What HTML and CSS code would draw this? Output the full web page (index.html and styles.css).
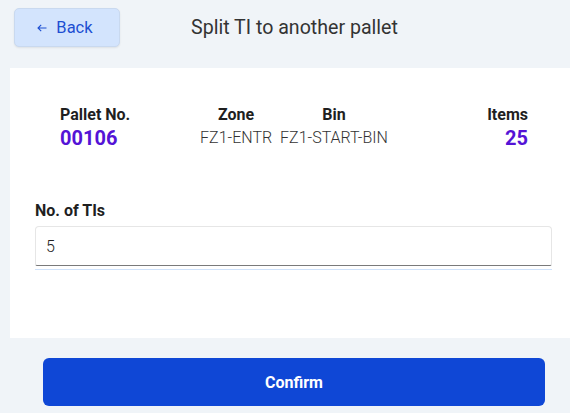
FILE: index.html
```html
<!DOCTYPE html>
<html>
<head>
<meta charset="utf-8">
<link rel="stylesheet" href="styles.css">
</head>
<body>
<div class="page">
  <header class="topbar">
    <button class="back-btn"><svg class="arrow" width="10" height="8" viewBox="0 0 10 8"><path d="M9.5 4H1M4.2 0.8L1 4l3.2 3.2" fill="none" stroke="currentColor" stroke-width="1.1"/></svg><span>Back</span></button>
    <h1 class="title">Split TI to another pallet</h1>
  </header>
  <section class="card">
    <div class="info">
      <div class="col col-left">
        <div class="label">Pallet No.</div>
        <div class="value-strong">00106</div>
      </div>
      <div class="mid">
        <div class="col col-center">
          <div class="label">Zone</div>
          <div class="value">FZ1-ENTR</div>
        </div>
        <div class="col col-center">
          <div class="label">Bin</div>
          <div class="value">FZ1-START-BIN</div>
        </div>
      </div>
      <div class="col col-right">
        <div class="label">Items</div>
        <div class="value-strong">25</div>
      </div>
    </div>
    <div class="field">
      <div class="field-label">No. of TIs</div>
      <div class="input">5</div>
      <div class="focus-line"></div>
    </div>
  </section>
  <div class="actions">
    <button class="confirm">Confirm</button>
  </div>
</div>
</body>
</html>
```
FILE: styles.css
```css
* { box-sizing: border-box; }
html, body {
  margin: 0;
  padding: 0;
  background: #f0f4f8;
  font-family: Roboto, "Liberation Sans", sans-serif;
  color: #222;
}
.page {
  width: 570px;
  height: 413px;
  overflow: hidden;
}
.topbar {
  display: flex;
  align-items: flex-start;
  height: 68px;
  padding: 8px 0 0 14px;
}
.back-btn {
  width: 106px;
  height: 39px;
  background: #d3e4fd;
  border: 1px solid #c9d9ef;
  border-radius: 5px;
  box-shadow: 0 1px 2px rgba(0,0,0,0.08);
  color: #1d4fd2;
  font-family: Roboto, "Liberation Sans", sans-serif;
  font-size: 16.5px;
  display: flex;
  align-items: center;
  justify-content: center;
  gap: 9px;
  padding: 0 4px 0 0;
}
.arrow {
  display: block;
  margin-top: 1px;
}
.title {
  margin: 0 0 0 71px;
  font-size: 19.6px;
  font-weight: 400;
  color: #333;
  line-height: 40px;
}
.card {
  margin-left: 10px;
  background: #fff;
  height: 270px;
  padding-top: 37px;
}
.info {
  display: grid;
  grid-template-columns: 1fr auto 1fr;
  padding: 0 42px 0 50px;
}
.mid {
  display: flex;
  gap: 8px;
}
.col-left { text-align: left; }
.col-center { text-align: center; }
.col-right { text-align: right; }
.label {
  font-size: 16px;
  font-weight: 700;
  line-height: 19px;
  color: #1f1f1f;
}
.value {
  font-size: 16px;
  font-weight: 300;
  color: #333;
  line-height: 24px;
  margin-top: 2px;
}
.value-strong {
  font-size: 20px;
  font-weight: 700;
  color: #5413d6;
  line-height: 24px;
  margin-top: 2px;
}
.field {
  padding: 51px 18px 0 25px;
}
.field-label {
  font-size: 16px;
  font-weight: 700;
  color: #1f1f1f;
  line-height: 19px;
  margin-bottom: 6px;
}
.input {
  height: 40px;
  border: 1px solid #e6e6e6;
  border-bottom: 1px solid #7a7a7a;
  border-radius: 4px 4px 2px 2px;
  padding: 0 10px;
  font-size: 16px;
  font-weight: 300;
  color: #222;
  display: flex;
  align-items: center;
}
.focus-line {
  height: 1px;
  background: #cfe2fb;
  margin-top: 3px;
}
.actions {
  padding: 20px 25px 0 43px;
}
.confirm {
  width: 502px;
  height: 48px;
  background: #0f47d6;
  border: none;
  border-radius: 6px;
  color: #fff;
  font-family: Roboto, "Liberation Sans", sans-serif;
  font-size: 16px;
  font-weight: 700;
}
```
